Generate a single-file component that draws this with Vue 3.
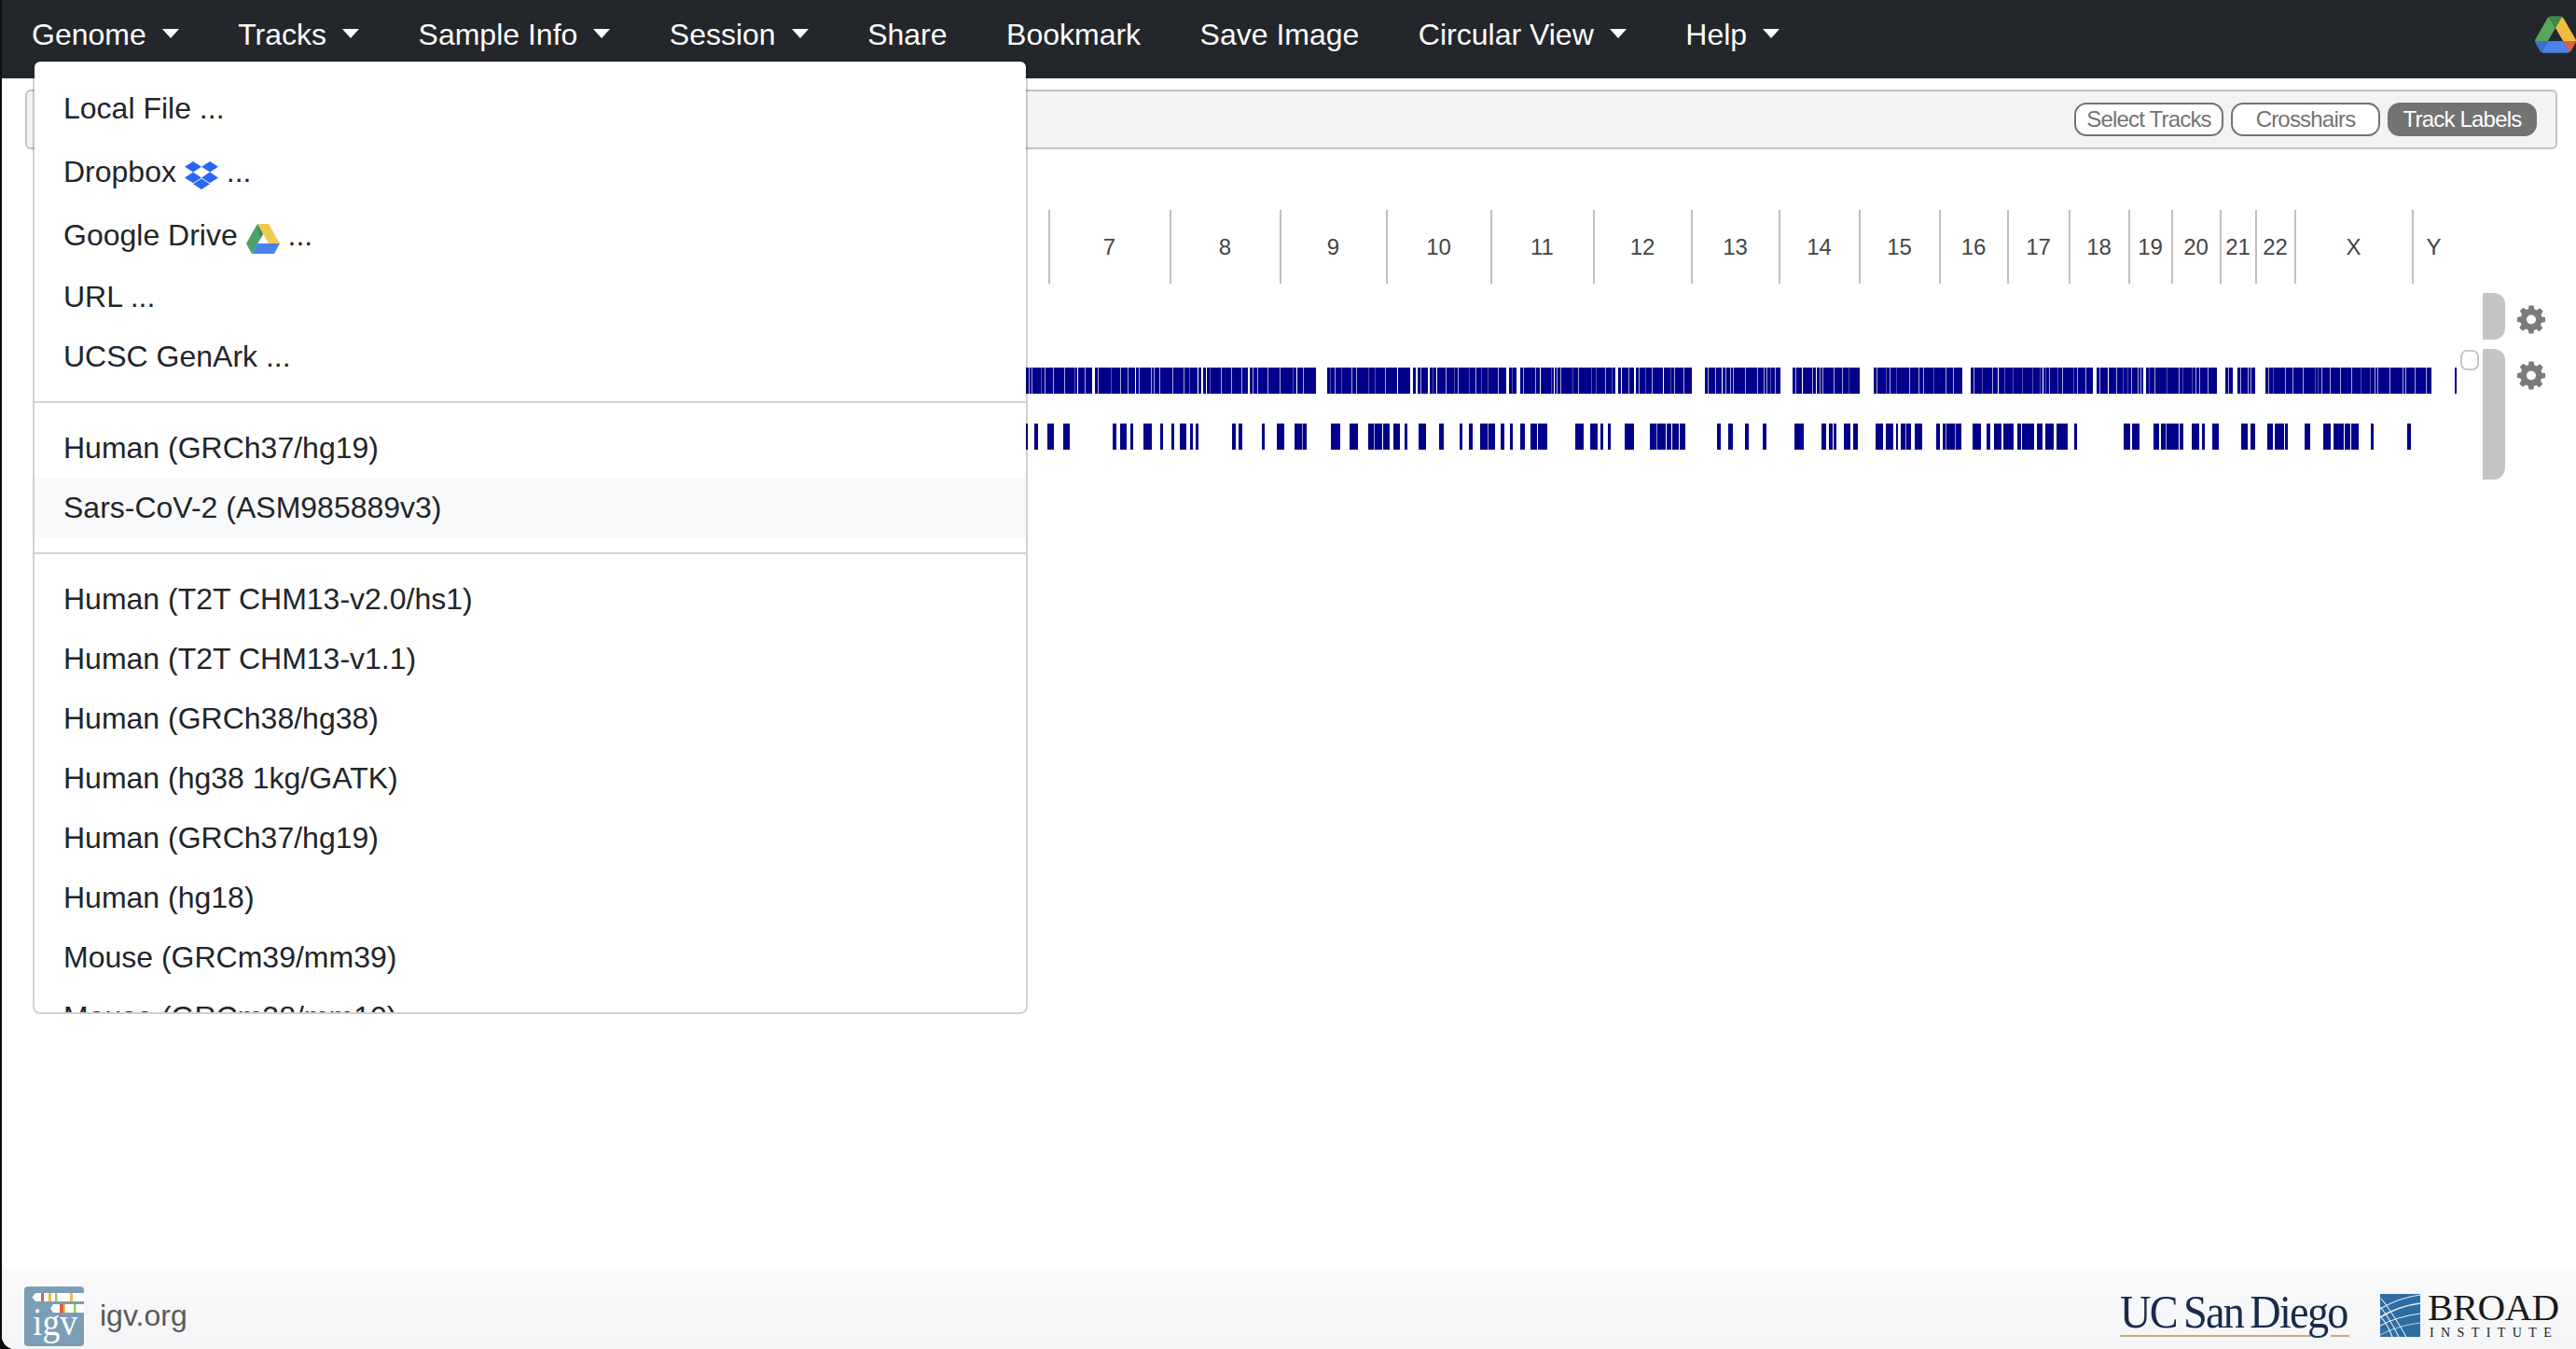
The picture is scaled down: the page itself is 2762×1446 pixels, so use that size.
<script setup>
const navItems = [
  { label: 'Genome', caret: true },
  { label: 'Tracks', caret: true },
  { label: 'Sample Info', caret: true },
  { label: 'Session', caret: true },
  { label: 'Share' },
  { label: 'Bookmark' },
  { label: 'Save Image' },
  { label: 'Circular View', caret: true },
  { label: 'Help', caret: true }
]

const builtIn = ['Human (GRCh37/hg19)', 'Sars-CoV-2 (ASM985889v3)']
const genomes = [
  'Human (T2T CHM13-v2.0/hs1)',
  'Human (T2T CHM13-v1.1)',
  'Human (GRCh38/hg38)',
  'Human (hg38 1kg/GATK)',
  'Human (GRCh37/hg19)',
  'Human (hg18)',
  'Mouse (GRCm39/mm39)',
  'Mouse (GRCm38/mm10)'
]

const tickX = [1125, 1255, 1373, 1487, 1599, 1709, 1814, 1908, 1994, 2080, 2153, 2219, 2283, 2329, 2381, 2419, 2461, 2587, 2633]
const chrNames = ['7', '8', '9', '10', '11', '12', '13', '14', '15', '16', '17', '18', '19', '20', '21', '22', 'X', 'Y']
const chromosomes = chrNames.map((name, i) => ({ name, width: tickX[i + 1] - tickX[i] }))

const z5 = (p) => p.map(([a, b]) => [1080 + a / 2.24, 1080 + b / 2.24])
const z6 = (p) => p.map(([a, b]) => [1780 + a / 1.742, 1780 + b / 1.742])

const row1 = [
  ...z5([[45, 203], [210, 465], [471, 578], [583, 742], [768, 968], [974, 982], [986, 1010], [1015, 1198], [1204, 1224], [1231, 1460], [1467, 1505], [1510, 1568]]),
  ...z6([[0, 59], [84, 224], [247, 373], [399, 565], [580, 808], [815, 902], [908, 1040], [1055, 1070], [1078, 1112], [1131, 1440], [1484, 1488]])
]
const row2 = [
  ...z5([[45, 49], [66, 74], [96, 113], [134, 151], [252, 261], [272, 287], [296, 303], [327, 347], [367, 374], [394, 402], [414, 431], [439, 446], [452, 460], [540, 548], [556, 564], [612, 618], [647, 666], [689, 718], [778, 800], [822, 843], [866, 918], [927, 943], [954, 961], [988, 1005], [1036, 1049], [1086, 1092], [1109, 1117], [1136, 1172], [1185, 1193], [1208, 1215], [1233, 1244], [1257, 1297], [1364, 1385], [1400, 1417], [1424, 1432], [1443, 1449], [1483, 1505], [1544, 1568]]),
  ...z6([[0, 47], [106, 113], [127, 136], [159, 165], [192, 199], [251, 268], [301, 329], [343, 370], [402, 444], [450, 469], [476, 490], [515, 562], [583, 600], [610, 616], [624, 660], [667, 762], [773, 779], [866, 896], [922, 977], [993, 1017], [1031, 1043], [1086, 1112], [1134, 1172], [1203, 1215], [1238, 1305], [1327, 1332], [1396, 1402]])
]

let seed = 12345
const rnd = () => {
  seed = (seed * 1664525 + 1013904223) % 4294967296
  return seed / 4294967296
}

const buildBars = (segments, y, dense) => {
  const out = []
  for (const [a, b] of segments) {
    const x0 = Math.round(a)
    const x1 = Math.round(b)
    out.push({ x: x0, y, w: Math.max(x1 - x0, 2), fill: '#00008b' })
    if (dense) {
      for (let x = x0 + 3; x < x1 - 2; x += 3 + Math.floor(rnd() * 12)) {
        const r = rnd()
        out.push({ x, y, w: 1, fill: r < 0.6 ? '#a6a6da' : r < 0.72 ? '#ffffff' : '#5050b0' })
      }
    } else if (x1 - x0 > 10) {
      for (let x = x0 + 4 + Math.floor(rnd() * 5); x < x1 - 3; x += 6 + Math.floor(rnd() * 9)) {
        const r = rnd()
        out.push({ x, y, w: r < 0.45 ? 2 + Math.floor(rnd() * 2) : 1, fill: r < 0.7 ? '#ffffff' : '#9a9ad4' })
      }
    }
  }
  return out
}

const bars = [...buildBars(row1, 90, true), ...buildBars(row2, 150, false)]
</script>

<template>
  <div class="page">
    <nav class="navbar">
      <ul class="nav-list">
        <li v-for="item in navItems" :key="item.label" class="nav-link">
          {{ item.label }}<span v-if="item.caret" class="caret"></span>
        </li>
      </ul>
      <svg class="drive-top" viewBox="0 0 87.3 78" width="44" height="40" aria-hidden="true">
        <path d="m6.6 66.85 3.85 6.65c.8 1.4 1.95 2.5 3.3 3.3l13.75-23.8h-27.5c0 1.55.4 3.1 1.2 4.5z" fill="#3a6fd0" />
        <path d="m43.65 25-13.75-23.8c-1.35.8-2.5 1.9-3.3 3.3l-25.4 44a9.06 9.06 0 0 0 -1.2 4.5h27.5z" fill="#56a65b" />
        <path d="m73.55 76.8c1.35-.8 2.5-1.9 3.3-3.3l1.6-2.75 7.65-13.25c.8-1.4 1.2-2.95 1.2-4.5h-27.502l5.852 11.5z" fill="#dd5f45" />
        <path d="m43.65 25 13.75-23.8c-1.35-.8-2.9-1.2-4.5-1.2h-18.5c-1.6 0-3.15.45-4.5 1.2z" fill="#3f8a4a" />
        <path d="m59.8 53h-32.3l-13.75 23.8c1.35.8 2.9 1.2 4.5 1.2h50.8c1.6 0 3.15-.45 4.5-1.2z" fill="#4a82ea" />
        <path d="m73.4 26.5-12.7-22c-.8-1.4-1.95-2.5-3.3-3.3l-13.75 23.8 16.15 28h27.45c0-1.55-.4-3.1-1.2-4.5z" fill="#f0bd42" />
      </svg>
    </nav>

    <div class="menu">
      <div class="item">Local File ...</div>
      <div class="item item-drop">
        Dropbox
        <svg class="icon-dropbox" viewBox="0 0 36 30" width="36" height="30" aria-hidden="true">
          <path d="M9 0l9 5.8-9 5.8-9-5.8zM27 0l9 5.8-9 5.8-9-5.8zM9 11.6l9 5.8-9 5.8-9-5.8zM27 11.6l9 5.8-9 5.8-9-5.8zM18 18.6l9 5.7-9 5.7-9-5.7z" fill="#2a66f5" />
        </svg>
        ...
      </div>
      <div class="item item-gdrive">
        Google Drive
        <svg class="icon-gdrive" viewBox="0 0 36 32" width="36" height="32" aria-hidden="true">
          <path d="M12 0h12l12 21H24z" fill="#f2c94f" />
          <path d="M12 0L0 21l6 11 12-21z" fill="#4aa36b" />
          <path d="M12 21h24l-6 11H6z" fill="#4a82ea" />
          <path d="M12 0h0l6 11-3 5z" fill="#3d8a5a" />
        </svg>
        ...
      </div>
      <div class="item">URL ...</div>
      <div class="item">UCSC GenArk ...</div>
      <hr class="divider" />
      <div
        v-for="(name, i) in builtIn"
        :key="name"
        class="item"
        :class="{ 'item-hover': i === 1 }"
      >{{ name }}</div>
      <hr class="divider" />
      <div v-for="name in genomes" :key="name + '-g'" class="item">{{ name }}</div>
    </div>

    <main class="main">
      <div class="toolbar">
        <button class="pill">Select Tracks</button>
        <button class="pill">Crosshairs</button>
        <button class="pill pill-on">Track Labels</button>
      </div>

      <div class="ruler">
        <div
          v-for="c in chromosomes"
          :key="c.name"
          class="chr"
          :style="{ width: c.width + 'px' }"
        >{{ c.name }}</div>
      </div>

      <div class="viewer">
        <div class="tracks">
          <svg class="track-svg" viewBox="2 0 2660 210" width="2660" height="210" shape-rendering="crispEdges" aria-hidden="true">
            <rect v-for="(b, i) in bars" :key="i" :x="b.x" :y="b.y" :width="b.w" height="28" :fill="b.fill" />
          </svg>
          <span class="track-check"></span>
        </div>
        <div class="rail">
          <div class="rail-row rail-short">
            <div class="handle"></div>
            <svg class="gear" viewBox="0 0 24 24" width="30" height="31" aria-hidden="true">
              <path d="M10 0h4l.7 3.2 1.9.8 2.8-1.8 2.8 2.8-1.8 2.8.8 1.9L24 10v4l-3.2.7-.8 1.9 1.8 2.8-2.8 2.8-2.8-1.8-1.9.8L14 24h-4l-.7-3.2-1.9-.8-2.8 1.8-2.8-2.8 1.8-2.8-.8-1.9L0 14v-4l3.2-.7.8-1.9-1.8-2.8 2.8-2.8 2.8 1.8 1.9-.8zM12 8a4 4 0 1 0 0 8 4 4 0 0 0 0-8z" fill="#7b7b7b" fill-rule="evenodd" />
            </svg>
          </div>
          <div class="rail-row rail-tall">
            <div class="handle"></div>
            <svg class="gear" viewBox="0 0 24 24" width="30" height="31" aria-hidden="true">
              <path d="M10 0h4l.7 3.2 1.9.8 2.8-1.8 2.8 2.8-1.8 2.8.8 1.9L24 10v4l-3.2.7-.8 1.9 1.8 2.8-2.8 2.8-2.8-1.8-1.9.8L14 24h-4l-.7-3.2-1.9-.8-2.8 1.8-2.8-2.8 1.8-2.8-.8-1.9L0 14v-4l3.2-.7.8-1.9-1.8-2.8 2.8-2.8 2.8 1.8 1.9-.8zM12 8a4 4 0 1 0 0 8 4 4 0 0 0 0-8z" fill="#7b7b7b" fill-rule="evenodd" />
            </svg>
          </div>
        </div>
      </div>
    </main>

    <footer class="footer">
      <div class="foot-left">
        <svg class="igv-logo" viewBox="0 0 64 64" width="64" height="64">
          <rect width="64" height="64" rx="4" fill="#7a9eb5" />
          <text x="9" y="52" class="igv-word" textLength="48" lengthAdjust="spacingAndGlyphs">igv</text>
          <path d="M12 7H64V16H12L8.5 11.5z" fill="#fff" />
          <rect x="18" y="7" width="3" height="9" fill="#e2603a" />
          <rect x="26" y="7" width="3" height="9" fill="#f0b84a" />
          <rect x="33" y="7" width="2.5" height="9" fill="#9fc95a" />
          <rect x="49" y="7" width="3" height="9" fill="#f0b84a" />
          <path d="M31 19H64V28H31L28 23.5z" fill="#fff" />
          <rect x="38" y="19" width="4" height="9" fill="#e2603a" />
          <rect x="42" y="19" width="2" height="9" fill="#f0b84a" />
          <rect x="53" y="19" width="2.5" height="9" fill="#9fc95a" />
        </svg>
        <span class="igv-link">igv.org</span>
      </div>
      <div class="foot-right">
        <div class="ucsd">
          <span class="ucsd-word">UC San Diego</span>
          <svg class="ucsd-rule" viewBox="0 0 246 2" width="246" height="2" aria-hidden="true">
            <path d="M0 1H204M226 1H246" stroke="#c8ab72" stroke-width="2" />
          </svg>
        </div>
        <svg class="broad-mark" viewBox="0 0 43 46" width="43" height="46" aria-hidden="true">
          <rect width="43" height="46" fill="#2e6ca4" />
          <g fill="none" stroke="#fff" stroke-width="1.1" opacity=".9">
            <path d="M0 16C12 9 27 3 43 1" />
            <path d="M0 25C13 17 27 12 43 10" stroke-width="1.5" />
            <path d="M0 34C13 27 27 23 43 21" />
            <path d="M0 44C13 37 27 33 43 31" stroke-width=".8" />
            <path d="M1 5C12 18 21 34 28 46" />
            <path d="M0 14C9 24 15 36 20 46" />
            <path d="M0 24C6 30 10 38 13 46" />
          </g>
        </svg>
        <div class="broad-word">
          <span class="broad-main">BROAD</span>
          <span class="broad-sub">INSTITUTE</span>
        </div>
      </div>
    </footer>
  </div>
</template>

<style>
html,
body {
  margin: 0;
  background: #0c0c0c;
}
</style>

<style scoped>
* {
  box-sizing: border-box;
}

.page {
  position: relative;
  display: flex;
  flex-direction: column;
  width: 2760px;
  height: 1446px;
  margin-left: 2px;
  overflow: hidden;
  border-bottom-left-radius: 14px;
  background: #fff;
  font-family: "Liberation Sans", Arial, sans-serif;
  font-size: 32px;
  line-height: 48px;
  color: #212529;
}

.navbar {
  display: flex;
  align-items: center;
  flex: none;
  height: 84px;
  padding-left: 16px;
  background: #23262b;
}

.nav-list {
  display: flex;
  gap: 31.5px;
  margin: 0 0 10px;
  padding: 0;
  list-style: none;
}

.nav-link {
  display: flex;
  align-items: center;
  padding: 0 16px;
  color: #fff;
  white-space: pre;
}

.caret {
  width: 0;
  height: 0;
  margin-left: 17px;
  border-top: 10px solid #fff;
  border-right: 9.6px solid transparent;
  border-left: 9.6px solid transparent;
  transform: translateY(-1px);
}

.drive-top {
  margin-left: auto;
  margin-bottom: 10px;
}

.menu {
  position: absolute;
  top: 64px;
  left: 33px;
  z-index: 5;
  width: 1067px;
  height: 1023px;
  padding: 18px 0 16px;
  overflow: hidden;
  border: 2px solid rgba(0, 0, 0, 0.18);
  border-radius: 8px;
  background: #fff;
  background-clip: padding-box;
}

.item {
  padding: 8px 31px;
  white-space: nowrap;
}

.item-drop {
  padding-top: 12px;
  padding-bottom: 10px;
}

.item-gdrive {
  padding-top: 10px;
  padding-bottom: 10px;
}

.icon-dropbox {
  vertical-align: -8px;
}

.icon-gdrive {
  vertical-align: -9px;
}

.item-hover {
  background: #f8f9fa;
}

.divider {
  height: 2px;
  margin: 16px 0;
  border: 0;
  background: #d2d2d2;
}

.main {
  flex: 1;
  min-height: 0;
}

.toolbar {
  display: flex;
  justify-content: flex-end;
  align-items: center;
  gap: 8px;
  height: 64px;
  margin: 12px 20px 0 25px;
  padding-right: 20px;
  border: 2px solid #c2c2c2;
  border-radius: 6px;
  background: #f3f3f3;
}

.pill {
  width: 160px;
  height: 36px;
  padding: 0;
  border: 2px solid #737373;
  border-radius: 13px;
  background: #fff;
  font-family: "Liberation Sans", Arial, sans-serif;
  font-size: 24px;
  letter-spacing: -0.8px;
  color: #737373;
}

.pill-on {
  background: #737373;
  color: #fff;
}

.ruler {
  display: flex;
  height: 79px;
  margin-top: 65px;
  padding-left: 1122px;
}

.chr {
  display: flex;
  align-items: center;
  justify-content: center;
  flex: none;
  padding-right: 1px;
  border-left: 2px solid #bfbfbf;
  font-size: 24px;
  color: #444;
}

.viewer {
  display: flex;
  align-items: flex-start;
}

.tracks {
  position: relative;
  flex: none;
  width: 2660px;
  height: 210px;
}

.track-svg {
  display: block;
}

.track-check {
  position: absolute;
  top: 71px;
  left: 2636px;
  width: 20px;
  height: 22px;
  border: 2px solid #c6c6c6;
  border-radius: 7px;
  background: #fff;
}

.rail {
  display: flex;
  flex-direction: column;
  gap: 10px;
  padding-top: 10px;
}

.rail-row {
  display: flex;
  gap: 13px;
}

.rail-short {
  height: 50px;
}

.rail-tall {
  height: 140px;
}

.handle {
  width: 24px;
  border-radius: 0 12px 12px 0;
  background: #c4c4c4;
}

.gear {
  margin-top: 13px;
}

.footer {
  display: flex;
  align-items: center;
  justify-content: space-between;
  flex: none;
  height: 86px;
  padding: 0 19px 0 24px;
  background: linear-gradient(#fafafb, #f4f5f7);
}

.foot-left {
  display: flex;
  align-items: center;
  gap: 17px;
  padding-top: 16px;
}

.igv-link {
  margin-bottom: 3px;
  color: #5a5a5a;
}

.igv-word {
  font-family: "Liberation Serif", "Times New Roman", serif;
  font-size: 42px;
  fill: #fff;
}

.foot-right {
  display: flex;
  align-self: flex-start;
  align-items: flex-start;
  padding-top: 17px;
}

.ucsd {
  display: flex;
  flex-direction: column;
  width: 246px;
  margin-right: 33px;
}

.ucsd-word {
  display: block;
  width: 270px;
  height: 53px;
  font-family: "Liberation Serif", "Times New Roman", serif;
  font-size: 51px;
  line-height: 58px;
  letter-spacing: -1.9px;
  word-spacing: -3px;
  white-space: nowrap;
  color: #182b49;
  transform: scaleX(0.907);
  transform-origin: left center;
}

.ucsd-rule {
  display: block;
  margin-top: 1px;
}

.broad-mark {
  flex: none;
  margin-top: 10px;
  margin-right: 8px;
}

.broad-word {
  display: flex;
  flex-direction: column;
  width: 140px;
  font-family: "Liberation Serif", "Times New Roman", serif;
  color: #1a1a1a;
}

.broad-main {
  height: 46px;
  padding-top: 2px;
  font-size: 41px;
  line-height: 44px;
  letter-spacing: -0.6px;
  white-space: nowrap;
}

.broad-sub {
  padding-left: 2px;
  font-size: 14px;
  line-height: 12px;
  letter-spacing: 7.4px;
  white-space: nowrap;
}
</style>
